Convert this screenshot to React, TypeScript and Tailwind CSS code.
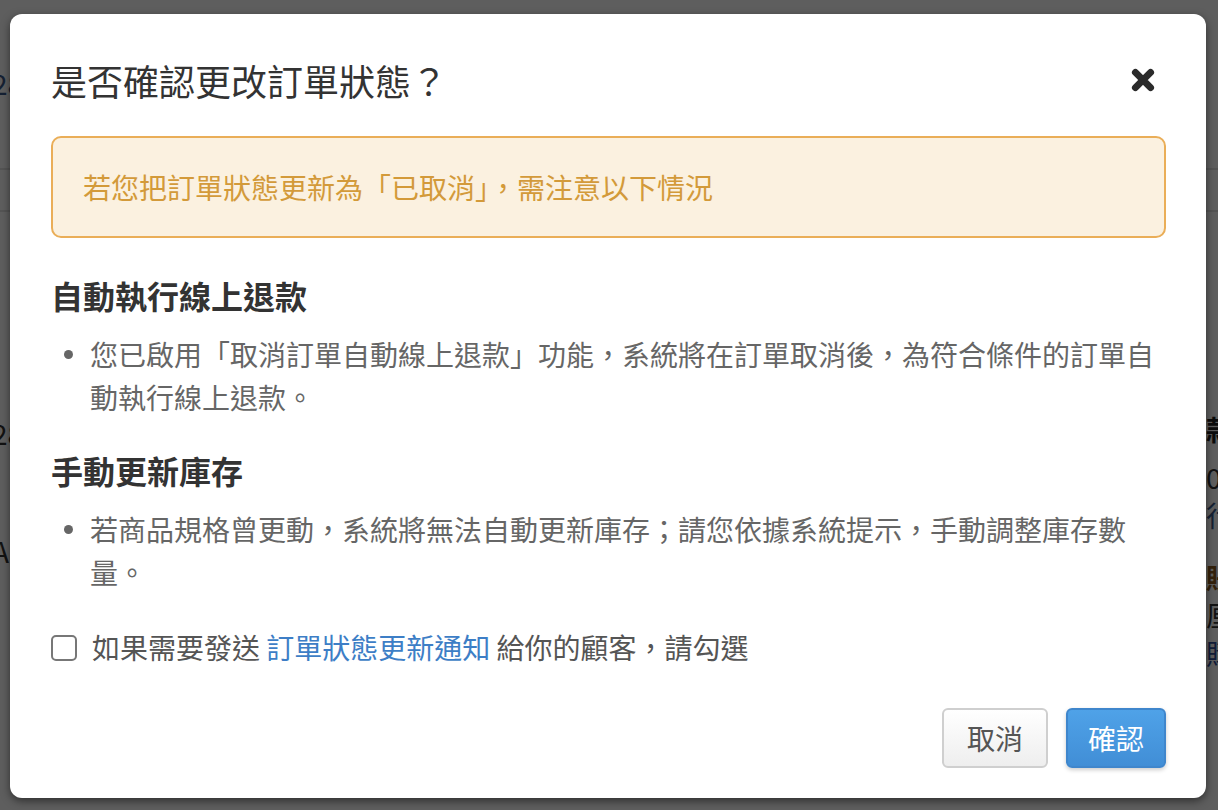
import React from "react";

function CloseIcon() {
  return (
    <svg viewBox="0 0 24 24" className="h-[26px] w-[26px]" fill="none">
      <path
        d="M5 5L19 19M19 5L5 19"
        stroke="#2b2b2b"
        strokeWidth={6.4}
        strokeLinecap="round"
      />
    </svg>
  );
}

function Bullet({ children }: { children: React.ReactNode }) {
  return (
    <li className="flex items-start">
      <span className="flex h-[43px] w-[39px] shrink-0 items-center pl-[13px]">
        <span className="h-[9px] w-[9px] rounded-full bg-[#666]" />
      </span>
      <span className="flex-1">{children}</span>
    </li>
  );
}

export default function App() {
  return (
    <div className="relative h-[810px] w-full overflow-hidden bg-white font-['Noto_Sans_CJK_TC','Noto_Sans_CJK_SC',sans-serif]">
      {/* page behind the dialog */}
      <div className="flex h-full flex-col">
        <div className="flex h-[170px] items-start border-b-2 border-[#e4e4e4] pt-[62px] text-[28px] text-[#3a5a8c]">
          <span className="-ml-[8px]">28</span>
        </div>
        <div className="h-[42px] border-b-2 border-[#e4e4e4]" />
        <div className="flex flex-1 justify-between text-[28px]">
          <div className="-ml-[8px] flex flex-col text-[#333]">
            <span className="mt-[200px]">28</span>
            <span className="mt-[76px]">A</span>
          </div>
          <div className="-mr-[40px] flex w-[52px] flex-col leading-[38px]">
            <span className="mt-[198px] font-bold text-[#222]">款</span>
            <span className="mt-[10px] text-[#333]">0</span>
            <span className="text-[#3a5a8c]">行</span>
            <span className="mt-[24px] font-bold text-[#8a5a20]">賬</span>
            <span className="text-[#333]">厘</span>
            <span className="text-[#2f4f9a]">購</span>
          </div>
        </div>
      </div>

      {/* overlay + dialog */}
      <div className="absolute inset-0 bg-black/[0.63] pl-[10px] pt-[14px]">
        <div className="flex h-[784px] w-[1196px] flex-col rounded-[12px] bg-white pb-[30px] pl-[41px] pr-[40px] pt-[45px] shadow-[0_3px_9px_rgba(0,0,0,0.5)]">
          <div className="flex items-center justify-between">
            <h2 className="text-[36px] leading-[42px] text-[#333]">是否確認更改訂單狀態？</h2>
            <button className="mr-[10px] flex items-center justify-center">
              <CloseIcon />
            </button>
          </div>

          <div className="mt-[35px] rounded-[10px] border-2 border-[#eaae58] bg-[#fbf1e0] px-[30px] py-[28px] text-[28px] leading-[42px] text-[#d39a3a]">
            若您把訂單狀態更新為「已取消」，需注意以下情況
          </div>

          <h3 className="mt-[35px] text-[32px] font-bold leading-[44px] text-[#333]">自動執行線上退款</h3>
          <ul className="mt-[16px] text-[28px] leading-[43px] text-[#666]">
            <Bullet>
              您已啟用「取消訂單自動線上退款」功能，系統將在訂單取消後，為符合條件的訂單自動執行線上退款。
            </Bullet>
          </ul>

          <h3 className="mt-[29px] text-[32px] font-bold leading-[44px] text-[#333]">手動更新庫存</h3>
          <ul className="mt-[16px] text-[28px] leading-[43px] text-[#666]">
            <Bullet>
              若商品規格曾更動，系統將無法自動更新庫存；請您依據系統提示，手動調整庫存數量。
            </Bullet>
          </ul>

          <label className="mt-[32px] flex items-center gap-[15px] text-[28px] leading-[43px] text-[#555]">
            <span className="h-[26px] w-[26px] shrink-0 rounded-[5px] border-2 border-[#777] bg-white" />
            <span>
              如果需要發送 <span className="text-[#3d7ec6]">訂單狀態更新通知</span> 給你的顧客，請勾選
            </span>
          </label>

          <div className="mt-[39px] flex justify-end gap-[18px]">
            <button className="flex h-[60px] w-[106px] items-center justify-center rounded-[6px] border-2 border-[#cfcfcf] bg-gradient-to-b from-white to-[#eeeeee] text-[28px] text-[#555]">
              取消
            </button>
            <button className="flex h-[60px] w-[100px] items-center justify-center rounded-[6px] border-2 border-[#3f86cc] bg-gradient-to-b from-[#4fa2e8] to-[#418ed6] text-[28px] text-white shadow-[0_2px_4px_rgba(0,0,0,0.2)]">
              確認
            </button>
          </div>
        </div>
      </div>
    </div>
  );
}
